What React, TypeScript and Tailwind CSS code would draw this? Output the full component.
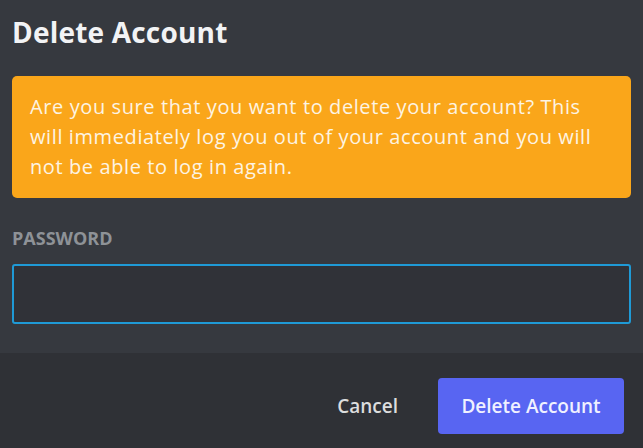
import React from "react";

const App = () => {
  return (
    <div className="w-[643px] h-[448px] flex flex-col bg-[#36393f] font-['Open_Sans',sans-serif] overflow-hidden">
      <div className="flex-1 px-3 pt-[15px]">
        <h2 className="text-[28px] leading-[34px] font-bold tracking-[0.2px] text-[#f2f3f5]">Delete Account</h2>
        <div className="mt-[27px] bg-[#faa61a] rounded-[5px] px-[18px] py-[16px] text-[20px] leading-[30px] tracking-[0.6px] text-[#fdf4e3]">
          Are you sure that you want to delete your account? This will immediately log you out of your account and you will not be able to log in again.
        </div>
        <label className="block mt-[30px] text-[18px] leading-[20px] font-bold text-[#8e9297]">PASSWORD</label>
        <input
          type="password"
          className="mt-[16px] block w-full h-[60px] rounded-[3px] bg-[#303238] border-2 border-[#1f9ad6] outline-none"
        />
      </div>
      <div className="h-[95px] bg-[#2f3136] flex items-start justify-end gap-[40px] px-[19px] pt-[25px]">
        <button className="h-[56px] text-[19px] font-semibold text-[#dcddde]">Cancel</button>
        <button className="w-[186px] h-[56px] rounded-[4px] bg-[#5865f2] text-[19px] font-semibold text-[#f0f1ff]">
          Delete Account
        </button>
      </div>
    </div>
  );
};

export default App;
